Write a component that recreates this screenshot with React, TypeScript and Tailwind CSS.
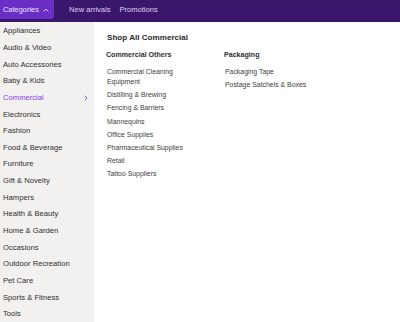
import React from 'react';

const categories = [
  'Appliances',
  'Audio & Video',
  'Auto Accessories',
  'Baby & Kids',
  'Commercial',
  'Electronics',
  'Fashion',
  'Food & Beverage',
  'Furniture',
  'Gift & Novelty',
  'Hampers',
  'Health & Beauty',
  'Home & Garden',
  'Occasions',
  'Outdoor Recreation',
  'Pet Care',
  'Sports & Fitness',
  'Tools',
];

const groups = [
  {
    title: 'Commercial Others',
    items: [
      'Commercial Cleaning Equipment',
      'Distilling & Brewing',
      'Fencing & Barriers',
      'Mannequins',
      'Office Supplies',
      'Pharmaceutical Supplies',
      'Retail',
      'Tattoo Suppliers',
    ],
  },
  {
    title: 'Packaging',
    items: ['Packaging Tape', 'Postage Satchels & Boxes'],
  },
];

const active = 'Commercial';

export default function App() {
  return (
    <div className="w-[400px] h-[322px] overflow-hidden bg-white font-['Liberation_Sans',Arial,sans-serif]">
      {/* Top nav */}
      <div className="h-[22px] bg-[#3a176c] flex items-start">
        <button className="h-[19px] w-[54px] bg-[#6a2ec6] rounded-br-[3px] flex items-center pl-[3px] gap-[4px] text-[7.45px] text-[#ece4ff]">
          <span>Categories</span>
          <svg width="6" height="4" viewBox="0 0 6 4" fill="none">
            <path d="M1 3.2 L3 1.2 L5 3.2" stroke="#ece4ff" strokeWidth="1" strokeLinecap="round" strokeLinejoin="round" />
          </svg>
        </button>
        <nav className="flex items-center h-[19px] ml-[15px] gap-[9px] text-[7.55px] text-[#dcd0f2]">
          <span>New arrivals</span>
          <span>Promotions</span>
        </nav>
      </div>

      <div className="flex h-[300px]">
        {/* Sidebar */}
        <ul className="w-[94px] shrink-0 bg-[#f3f1ef] pt-[0.67px]">
          {categories.map((c) => (
            <li
              key={c}
              className={`h-[16.666px] flex items-center justify-between pl-[3px] pr-[6px] text-[7.65px] ${
                c === active ? 'text-[#8a3cf0]' : 'text-[#2e2e2e]'
              }`}
            >
              <span>{c}</span>
              {c === active && (
                <svg width="4" height="6" viewBox="0 0 4 6" fill="none">
                  <path d="M1 1 L3 3 L1 5" stroke="#7a48d2" strokeWidth="0.9" strokeLinecap="round" strokeLinejoin="round" />
                </svg>
              )}
            </li>
          ))}
        </ul>

        {/* Mega menu panel */}
        <div className="flex-1 pl-[12px] pt-[10px]">
          <h3 className="text-[8.1px] font-semibold text-[#2a2a2a] leading-[12px] pl-[1px]">Shop All Commercial</h3>
          <div className="flex mt-[5.5px]">
            {groups.map((g) => (
              <div key={g.title} className="w-[118px] pr-[24px]">
                <h4 className="text-[7.1px] font-semibold text-[#2e2e2e] leading-[11px]">{g.title}</h4>
                <ul className="mt-[6px] flex flex-col gap-[2.8px] pl-[1px]">
                  {g.items.map((it) => (
                    <li key={it} className="text-[6.9px] leading-[10.4px] text-[#3d3d3d]">
                      {it}
                    </li>
                  ))}
                </ul>
              </div>
            ))}
          </div>
        </div>
      </div>
    </div>
  );
}
